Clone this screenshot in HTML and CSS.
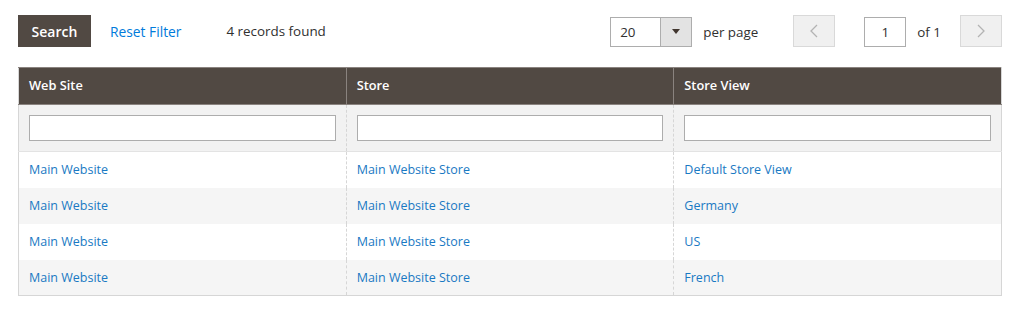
FILE: index.html
```html
<!DOCTYPE html>
<html lang="en">
<head>
<meta charset="utf-8">
<title>Stores Grid</title>
<link rel="stylesheet" href="styles.css">
</head>
<body>
<div class="page">
  <div class="toolbar">
    <div class="actions">
      <button class="btn-search" type="button">Search</button>
      <a class="reset" href="#">Reset Filter</a>
      <span class="count">4 records found</span>
    </div>
    <div class="pager">
      <div class="limiter">
        <span class="limiter-value">20</span>
        <span class="limiter-arrow"><svg width="8" height="5" viewBox="0 0 8 5"><path d="M0 0h8L4 5z" fill="#41362f"/></svg></span>
      </div>
      <span class="per-page">per page</span>
      <button class="nav-btn prev" type="button"><svg width="8" height="14" viewBox="0 0 8 14"><path d="M7 1L1 7l6 6" fill="none" stroke="#b3b3b3" stroke-width="1.3"/></svg></button>
      <span class="page-input">1</span>
      <span class="of">of 1</span>
      <button class="nav-btn next" type="button"><svg width="8" height="14" viewBox="0 0 8 14"><path d="M1 1l6 6-6 6" fill="none" stroke="#b3b3b3" stroke-width="1.3"/></svg></button>
    </div>
  </div>
  <table class="grid">
    <thead>
      <tr class="head-row">
        <th>Web Site</th>
        <th>Store</th>
        <th>Store View</th>
      </tr>
      <tr class="filter-row">
        <td><span class="filter-input"></span></td>
        <td><span class="filter-input"></span></td>
        <td><span class="filter-input"></span></td>
      </tr>
    </thead>
    <tbody>
      <tr>
        <td><a href="#">Main Website</a></td>
        <td><a href="#">Main Website Store</a></td>
        <td><a href="#">Default Store View</a></td>
      </tr>
      <tr class="alt">
        <td><a href="#">Main Website</a></td>
        <td><a href="#">Main Website Store</a></td>
        <td><a href="#">Germany</a></td>
      </tr>
      <tr>
        <td><a href="#">Main Website</a></td>
        <td><a href="#">Main Website Store</a></td>
        <td><a href="#">US</a></td>
      </tr>
      <tr class="alt">
        <td><a href="#">Main Website</a></td>
        <td><a href="#">Main Website Store</a></td>
        <td><a href="#">French</a></td>
      </tr>
    </tbody>
  </table>
</div>
</body>
</html>
```

FILE: styles.css
```css
* { box-sizing: border-box; }
html, body { margin: 0; padding: 0; background: #fff; }
body {
  font-family: "Open Sans", "Liberation Sans", sans-serif;
  color: #303030;
  font-size: 13px;
}
.page {
  padding: 15px 22px 0 18px;
}
.toolbar {
  display: flex;
  align-items: center;
  justify-content: space-between;
  height: 32px;
}
.actions {
  display: flex;
  align-items: center;
}
.btn-search {
  height: 32px;
  width: 73px;
  padding: 0;
  border: 1px solid #514943;
  background: #514943;
  color: #fff;
  font-family: inherit;
  font-size: 14px;
  font-weight: 600;
  cursor: pointer;
}
.reset {
  margin-left: 19px;
  color: #007bdb;
  text-decoration: none;
  font-size: 13.8px;
}
.count {
  margin-left: 45px;
  font-size: 13.4px;
  color: #303030;
}
.pager {
  display: flex;
  align-items: center;
  margin-top: 1px;
}
.limiter {
  display: flex;
  height: 30px;
  width: 82px;
  border: 1px solid #adadad;
  background: #fff;
}
.limiter-value {
  flex: 1;
  padding-left: 9px;
  line-height: 28px;
  font-size: 13.4px;
}
.limiter-arrow {
  width: 31px;
  background: #e3e3e3;
  border-left: 1px solid #adadad;
  display: flex;
  align-items: center;
  justify-content: center;
}
.per-page {
  margin-left: 11px;
  font-size: 13.4px;
}
.nav-btn {
  width: 42px;
  height: 32px;
  margin-top: -1px;
  padding: 0;
  border: 1px solid #d9d9d9;
  background: #f0f0f0;
  display: flex;
  align-items: center;
  justify-content: center;
}
.prev { margin-left: 35px; }
.page-input {
  margin-left: 29px;
  width: 42px;
  height: 30px;
  border: 1px solid #adadad;
  background: #fff;
  text-align: center;
  line-height: 28px;
  font-size: 13.4px;
}
.of {
  margin-left: 11px;
  margin-right: 19px;
  font-size: 13.4px;
}
.grid {
  margin-top: 20px;
  width: 100%;
  border-collapse: collapse;
  table-layout: fixed;
  border: 1px solid #d6d6d6;
}
.head-row th {
  background: #514943;
  color: #fff;
  font-weight: 600;
  font-size: 12.8px;
  text-align: left;
  height: 37px;
  padding: 0 10px 2px;
  border: 1px solid #8a837f;
  line-height: 16px;
  vertical-align: middle;
}
.head-row th:first-child { border-left-color: #d6d6d6; }
.head-row th:last-child { border-right-color: #d6d6d6; }
.filter-row td {
  background: #f2f2f2;
  height: 47px;
  padding: 0 10px;
  border-bottom: 1px solid #e3e3e3;
}
.filter-input {
  display: block;
  height: 26px;
  background: #fff;
  border: 1px solid #adadad;
  margin-top: -1px;
}
td {
  padding: 0 10px;
  height: 36px;
  border-left: 1px dashed #d6d6d6;
  vertical-align: middle;
  font-size: 12.5px;
}
td:first-child { border-left: 0; }
tbody tr.alt td { background: #f5f5f5; }
tbody a {
  color: #1979c3;
  text-decoration: none;
}
```
